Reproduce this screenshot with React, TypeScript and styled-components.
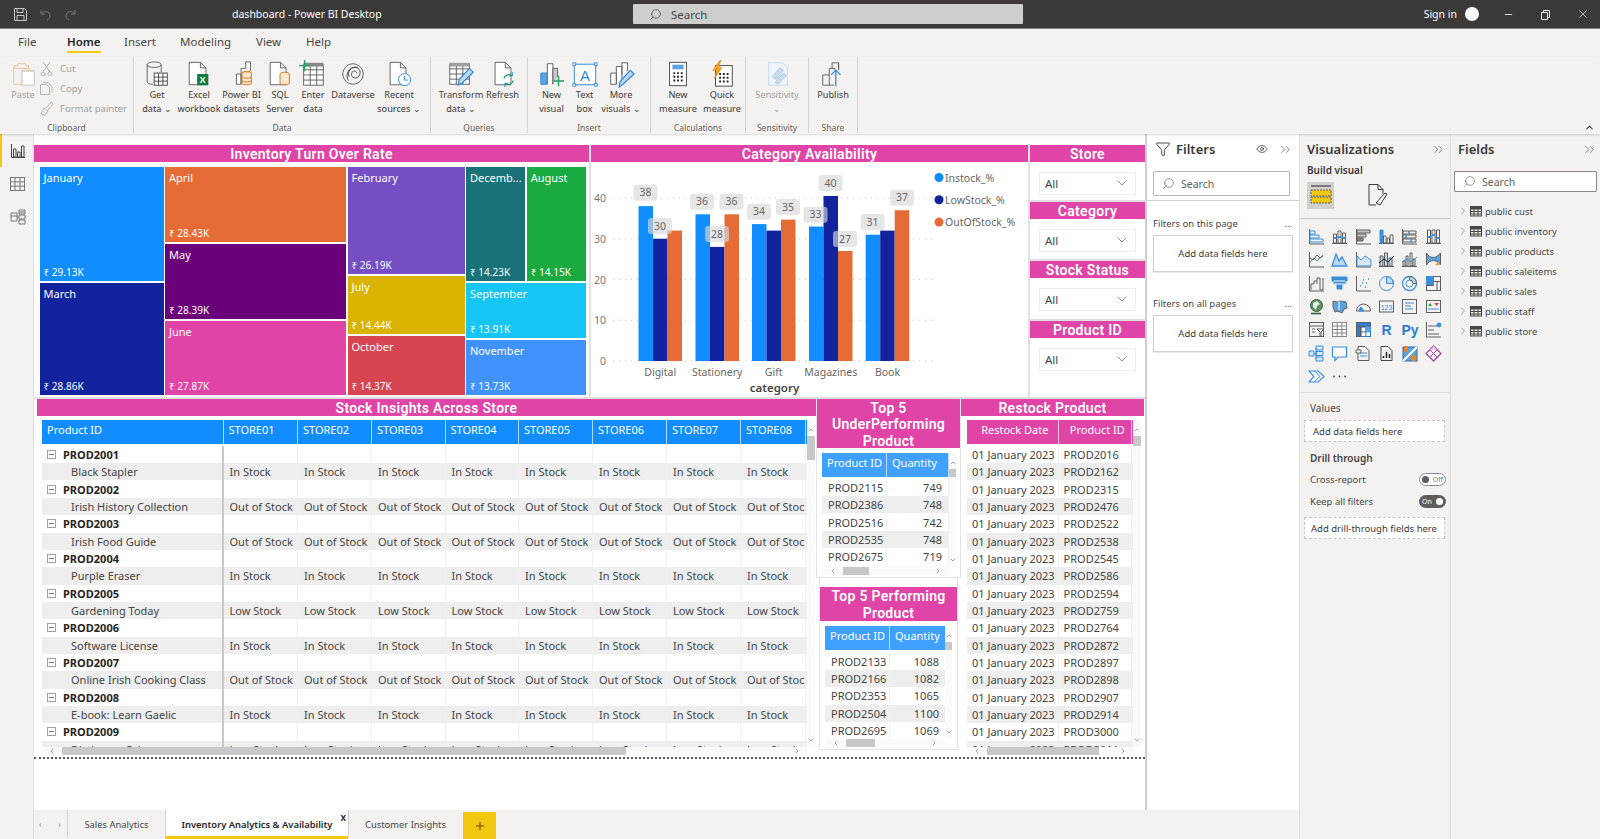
import React from 'react';
import styled, { createGlobalStyle } from 'styled-components';
import { ChevronDown, ChevronRight, ChevronUp, ChevronLeft, ChevronsRight, Search, Filter, Eye, Minus, X, Plus } from 'lucide-react';

const UI = `"Noto Sans", "Open Sans", sans-serif`;
const PINK = '#e044a7';
const D = '#605e5c';
const B = '#3a8fd8';

const GlobalStyle = createGlobalStyle`
  html, body { margin: 0; padding: 0; background: #fff; overflow: hidden; }
  * { box-sizing: border-box; }
  #root { width: 1600px; height: 839px; }
`;

const Window = styled.div`
  width: 1600px;
  height: 839px;
  display: flex;
  flex-direction: column;
  overflow: hidden;
  font-family: ${UI};
  color: #333;
`;

/* title bar */
const TitleBar = styled.div`
  height: 29px;
  flex: none;
  background: #3b3a39;
  border-bottom: 1px solid #8a8886;
  display: flex;
  align-items: center;
  color: #fff;
  font-size: 10.5px;
`;
const QuickIcons = styled.div`
  width: 232px;
  display: flex;
  gap: 10px;
  padding-left: 13px;
  align-items: center;
`;
const AppName = styled.div`
  width: 401px;
`;
const TopSearch = styled.div`
  width: 390px;
  height: 20px;
  background: #cdcdcb;
  border-radius: 1px;
  display: flex;
  align-items: center;
  gap: 9px;
  padding-left: 16px;
  color: #484644;
  font-size: 11.5px;
`;
const TopRight = styled.div`
  margin-left: auto;
  display: flex;
  align-items: center;
  margin-right: -1px;
`;
const SignIn = styled.span`
  margin-right: 8px;
  font-size: 10.5px;
`;
const Avatar = styled.span`
  width: 14px;
  height: 14px;
  border-radius: 50%;
  background: #fff;
  margin-right: 11px;
`;
const WinButton = styled.span`
  width: 37px;
  display: flex;
  justify-content: center;
  color: #e8e8e8;
`;

/* menu + ribbon */
const MenuBar = styled.div`
  height: 28px;
  flex: none;
  background: #f3f2f1;
  display: flex;
  font-size: 11.5px;
  color: #484644;
  padding-left: 18px;
`;
const MenuItem = styled.div<{ $w: number; $active?: boolean }>`
  width: ${p => p.$w}px;
  padding-top: 5px;
  position: relative;
  color: ${p => (p.$active ? '#252423' : '#484644')};
  font-weight: ${p => (p.$active ? 600 : 400)};
  span {
    display: inline-block;
    padding-bottom: 2px;
    border-bottom: ${p => (p.$active ? '2px solid #f2c811' : '2px solid transparent')};
  }
`;
const Ribbon = styled.div`
  height: 77px;
  flex: none;
  background: #f3f2f1;
  display: flex;
  box-shadow: 0 1px 2px rgba(0, 0, 0, 0.16);
  position: relative;
  z-index: 2;
`;
const Group = styled.div<{ $w: number; $pad?: number }>`
  width: ${p => p.$w}px;
  flex: none;
  height: 76px;
  border-right: 1px solid #d6d4d2;
  display: flex;
  flex-direction: column;
  padding-left: ${p => p.$pad ?? 0}px;
`;
const GroupBody = styled.div`
  flex: 1;
  display: flex;
  min-height: 0;
`;
const GroupLabel = styled.div<{ $shift?: number }>`
  height: 13px;
  line-height: 15px;
  text-align: center;
  font-size: 8.5px;
  color: #605e5c;
  margin-left: ${p => -(p.$shift ?? 0)}px;
`;
const RibbonBtn = styled.div<{ $w: number; $muted?: boolean }>`
  width: ${p => p.$w}px;
  flex: none;
  display: flex;
  flex-direction: column;
  align-items: center;
  text-align: center;
  font-size: 9.2px;
  line-height: 14px;
  color: ${p => (p.$muted ? '#a19f9d' : '#3b3a39')};
  padding-top: 3px;
  svg { flex: none; }
  span { white-space: nowrap; }
`;
const SmallStack = styled.div`
  display: flex;
  flex-direction: column;
  gap: 5px;
  padding-top: 4px;
  margin-left: -4px;
`;
const SmallCmd = styled.div`
  display: flex;
  align-items: center;
  gap: 6px;
  height: 15px;
  font-size: 9.5px;
  color: #a19f9d;
  white-space: nowrap;
`;
const Collapse = styled.div`
  margin-left: auto;
  align-self: flex-end;
  padding: 0 5px 1px 0;
  color: #484644;
  display: flex;
`;

/* body */
const Body = styled.div`
  flex: 1;
  display: flex;
  min-height: 0;
`;
const LeftNav = styled.div`
  width: 34px;
  flex: none;
  background: #f3f2f1;
  border-right: 1px solid #e1dfdd;
  display: flex;
  flex-direction: column;
`;
const NavItem = styled.div<{ $active?: boolean }>`
  height: 33.3px;
  display: flex;
  align-items: center;
  justify-content: center;
  border-left: 2px solid ${p => (p.$active ? '#f2c811' : 'transparent')};
`;
const Center = styled.div`
  width: 1265px;
  flex: none;
  display: flex;
  flex-direction: column;
`;
const CenterTop = styled.div`
  flex: 1;
  display: flex;
  min-height: 0;
`;
const Canvas = styled.div`
  width: 1111px;
  flex: none;
  background: #fff;
  padding-top: 11px;
`;
const Page = styled.div`
  height: 614px;
  border-bottom: 2px dotted #555;
  display: flex;
  flex-direction: column;
`;
const TopRow = styled.div`
  height: 254px;
  flex: none;
  display: flex;
  border-bottom: 2px solid #e0e0e0;
`;
const BottomRow = styled.div`
  flex: 1;
  display: flex;
  padding-left: 3px;
  min-height: 0;
`;
const VisualTitle = styled.div<{ $h?: number; $lh?: number; $top?: number }>`
  height: ${p => p.$h ?? 17}px;
  margin-top: ${p => p.$top ?? 0}px;
  padding-top: ${p => (p.$lh ? 1 : 0)}px;
  background: ${PINK};
  color: #fff;
  font-family: Roboto, "Noto Sans", sans-serif;
  font-weight: 600;
  font-size: 14px;
  letter-spacing: 0.3px;
  line-height: ${p => p.$lh ?? 19}px;
  text-align: center;
  flex: none;
`;
const Visual = styled.div<{ $w: number }>`
  width: ${p => p.$w}px;
  flex: none;
  display: flex;
  flex-direction: column;
  min-height: 0;
`;

/* treemap */
const Tree = styled.div`
  display: flex;
  gap: 1.5px;
  padding: 4.5px 0 0 5.5px;
  height: 233px;
`;
const TreeCol = styled.div<{ $w: number }>`
  width: ${p => p.$w}px;
  flex: none;
  display: flex;
  flex-direction: column;
  gap: 2px;
`;
const TreeRow = styled.div<{ $h: number }>`
  height: ${p => p.$h}px;
  flex: none;
  display: flex;
  gap: 1.5px;
`;
const Tile = styled.div<{ $c: string; $h?: number }>`
  background: ${p => p.$c};
  flex: ${p => (p.$h ? `0 0 ${p.$h}px` : '1 1 0')};
  min-width: 0;
  color: #fff;
  display: flex;
  flex-direction: column;
  justify-content: space-between;
  padding: 3px 4px 1px;
  font-size: 11px;
  line-height: 16px;
  overflow: hidden;
  white-space: nowrap;
`;
const TileValue = styled.span`
  font-size: 10px;
`;

/* chart */
const ChartBox = styled.div`
  height: 252px;
  border-left: 2px solid #e0e0e0;
  border-right: 2px solid #e0e0e0;
  svg { display: block; }
`;

/* slicers */
const Slicer = styled.div<{ $h: number }>`
  height: ${p => p.$h}px;
  display: flex;
  flex-direction: column;
  border-bottom: 2px solid #e0e0e0;
  &:last-child { border-bottom: none; }
`;
const Dropdown = styled.div`
  margin: 9.5px 9px 0 9px;
  height: 23px;
  border: 1px solid #eeeeee;
  display: flex;
  align-items: center;
  justify-content: space-between;
  padding: 0 5px;
  font-size: 11.5px;
  color: #444;
`;

/* tables */
const TableFrame = styled.div<{ $m?: string }>`
  display: grid;
  grid-template-columns: 1fr auto;
  grid-template-rows: 1fr auto;
  flex: 1;
  min-height: 0;
  padding: ${p => p.$m ?? '4px 1px 2px 5px'};
`;
const Grid = styled.div`
  overflow: hidden;
  min-height: 0;
`;
const Row = styled.div<{ $cols: string; $alt?: boolean }>`
  display: grid;
  grid-template-columns: ${p => p.$cols};
  height: 17.35px;
  background: ${p => (p.$alt ? '#eeeeee' : '#fff')};
  font-size: 11px;
  line-height: 17px;
  color: #444;
  white-space: nowrap;
`;
const HeadRow = styled.div<{ $cols: string; $c: string; $gap?: number }>`
  display: grid;
  grid-template-columns: ${p => p.$cols};
  height: 24px;
  margin-bottom: ${p => p.$gap ?? 1.8}px;
  background: ${p => p.$c};
  color: #fff;
  font-size: 11px;
  line-height: 19px;
`;
const HeadCell = styled.div<{ $center?: boolean }>`
  padding-left: 5px;
  border-right: 1px solid #ffffffaa;
  text-align: ${p => (p.$center ? 'center' : 'left')};
  white-space: nowrap;
  overflow: hidden;
`;
const Cell = styled.div<{ $pad?: number; $right?: boolean; $bold?: boolean; $sep?: boolean }>`
  padding-left: ${p => p.$pad ?? 6}px;
  padding-right: ${p => (p.$right ? 6 : 0)}px;
  font-weight: ${p => (p.$bold ? 700 : 400)};
  color: ${p => (p.$bold ? '#252423' : '#444')};
  border-right: ${p => (p.$sep ? '2px solid #c8c8c8' : '1px solid #f0f0f0')};
  overflow: hidden;
  display: flex;
  align-items: center;
  justify-content: ${p => (p.$right ? 'flex-end' : 'flex-start')};
`;
const Expander = styled.span`
  width: 9px;
  height: 9px;
  border: 1px solid #a19f9d;
  margin-right: 7px;
  flex: none;
  display: flex;
  align-items: center;
  justify-content: center;
  &::after { content: ''; width: 5px; height: 1px; background: #777; }
`;
const VBar = styled.div<{ $w: number; $top: number; $h: number }>`
  width: ${p => p.$w}px;
  background: #fafafa;
  display: flex;
  flex-direction: column;
  align-items: center;
  color: #777;
  padding-top: ${p => p.$top}px;
  i { width: 100%; height: ${p => p.$h}px; background: #c8c8c8; margin-top: 2px; }
  svg:last-child { margin-top: auto; margin-bottom: 3px; }
`;
const HBar = styled.div<{ $pad: number; $thumb: number }>`
  height: 8px;
  background: #fafafa;
  display: flex;
  align-items: center;
  color: #777;
  padding: 0 ${p => p.$pad}px;
  i { height: 8px; width: ${p => p.$thumb}px; background: #c8c8c8; margin-left: 6px; }
  svg:last-child { margin-left: auto; }
`;
const MidCol = styled.div`
  width: 145px;
  flex: none;
  display: flex;
  flex-direction: column;
`;
const MiniVisual = styled.div<{ $h: number; $inset?: number }>`
  height: ${p => p.$h}px;
  margin: 0 ${p => p.$inset ?? 0}px;
  border: 1px solid #e4e4e4;
  border-top: none;
  display: flex;
  flex-direction: column;
  flex: none;
`;

/* filter pane */
const FilterPane = styled.div`
  width: 154px;
  flex: none;
  background: #fff;
  border-left: 2px solid #d2d0ce;
  display: flex;
  flex-direction: column;
`;
const PaneHead = styled.div<{ $split?: boolean; $pr?: number }>`
  height: 30px;
  flex: none;
  display: flex;
  align-items: center;
  font-size: 13px;
  font-weight: 600;
  color: #3b3a39;
  padding-left: ${p => (p.$split ? 7 : 0)}px;
  padding-right: ${p => p.$pr ?? 0}px;
  justify-content: ${p => (p.$split ? 'space-between' : 'flex-start')};
`;
const FilterIcon = styled(Filter)`
  margin: 0 5px 0 8px;
`;
const EyeIcon = styled(Eye)`
  margin-left: auto;
`;
const CloseChevrons = styled(ChevronsRight)`
  margin: 0 6px 0 10px;
`;
const SearchIcon = styled(Search)`
  transform: scaleX(-1);
`;
const SearchWrap = styled.div<{ $pad: string; $line?: boolean }>`
  padding: ${p => p.$pad};
  border-bottom: ${p => (p.$line ? '1px solid #d2d0ce' : 'none')};
`;
const PaneSearch = styled.div<{ $dark?: boolean; $w: number; $h: number }>`
  width: ${p => p.$w}px;
  height: ${p => p.$h}px;
  background: #fff;
  border: 1px solid ${p => (p.$dark ? '#8a8886' : '#b8b6b4')};
  border-radius: 1px;
  display: flex;
  align-items: center;
  gap: 6px;
  padding-left: 8px;
  font-size: 10.5px;
  color: #605e5c;
`;
const FilterHead = styled.div<{ $top: number }>`
  margin: ${p => p.$top}px 7px 0 6px;
  height: 16px;
  display: flex;
  justify-content: space-between;
  align-items: center;
  font-size: 9.5px;
  color: #484644;
`;
const FilterBox = styled.div`
  margin: 4px 6px 0;
  height: 37px;
  width: 140px;
  border: 1px solid #d2d0ce;
  box-shadow: 0 1px 1px rgba(0, 0, 0, 0.08);
  font-size: 9.5px;
  color: #3b3a39;
  display: flex;
  align-items: center;
  justify-content: center;
`;

/* viz pane */
const VizPane = styled.div`
  width: 151px;
  flex: none;
  background: #f3f2f1;
  border-left: 1px solid #e1dfdd;
  display: flex;
  flex-direction: column;
`;
const BuildLabel = styled.div`
  font-size: 10px;
  font-weight: 600;
  color: #3b3a39;
  padding-left: 7px;
  height: 13px;
  line-height: 13px;
`;
const BuildTabs = styled.div`
  display: flex;
  align-items: center;
  padding: 3px 0 0 7px;
  height: 42px;
  border-bottom: 1px solid #c8c6c4;
`;
const BuildTab = styled.div<{ $on?: boolean }>`
  width: 27px;
  height: 27px;
  margin-bottom: 8px;
  background: ${p => (p.$on ? '#d2d0ce' : 'transparent')};
  display: flex;
  align-items: center;
  justify-content: center;
  margin-right: 30px;
`;
const VizGrid = styled.div`
  display: grid;
  grid-template-columns: repeat(6, 23.33px);
  grid-auto-rows: 23.33px;
  padding: 6px 0 0 5px;
  height: 174px;
  border-bottom: 1px solid #e1dfdd;
  justify-items: center;
  align-items: center;
`;
const VizLetter = styled.span<{ $fs: number }>`
  font-family: "Liberation Sans", sans-serif;
  font-weight: 700;
  font-size: ${p => p.$fs}px;
  color: #2b7cd3;
  line-height: 1;
`;
const WellLabel = styled.div<{ $top: number; $bold?: boolean }>`
  padding-left: 10px;
  margin-top: ${p => p.$top}px;
  font-size: 10px;
  line-height: 14px;
  color: #484644;
  font-weight: ${p => (p.$bold ? 600 : 400)};
`;
const Well = styled.div<{ $pl: number; $top: number }>`
  margin: ${p => p.$top}px 4px 0 4px;
  width: 141px;
  height: 22px;
  background: #fff;
  border: 1px dashed #c8c6c4;
  font-size: 9.5px;
  color: #3b3a39;
  display: flex;
  align-items: center;
  padding-left: ${p => p.$pl}px;
  white-space: nowrap;
`;
const ToggleRow = styled.div<{ $top: number }>`
  margin: ${p => p.$top}px 4px 0 10px;
  height: 14px;
  display: flex;
  justify-content: space-between;
  align-items: center;
  font-size: 9.5px;
  color: #484644;
`;
const Toggle = styled.span<{ $on?: boolean }>`
  width: 27px;
  height: 13px;
  border-radius: 7px;
  border: 1px solid ${p => (p.$on ? '#605e5c' : '#8a8886')};
  background: ${p => (p.$on ? '#605e5c' : '#fff')};
  color: ${p => (p.$on ? '#fff' : '#777')};
  font-size: 7px;
  display: flex;
  flex-direction: ${p => (p.$on ? 'row' : 'row-reverse')};
  align-items: center;
  justify-content: space-between;
  padding: 0 2px;
  &::after {
    content: '';
    width: 7px;
    height: 7px;
    border-radius: 50%;
    background: ${p => (p.$on ? '#fff' : '#605e5c')};
  }
`;

/* fields pane */
const FieldsPane = styled.div`
  flex: 1;
  background: #f3f2f1;
  border-left: 1px solid #e1dfdd;
  display: flex;
  flex-direction: column;
`;
const FieldList = styled.div`
  padding-top: 9px;
`;
const FieldRow = styled.div`
  height: 20px;
  display: flex;
  align-items: center;
  padding-left: 6px;
  font-size: 9.5px;
  color: #484644;
  white-space: nowrap;
`;
const FieldTable = styled.svg`
  margin: 0 3px 0 1px;
`;

/* page tabs */
const TabBar = styled.div`
  height: 29px;
  flex: none;
  background: #f3f2f1;
  display: flex;
  align-items: flex-end;
  font-size: 9.4px;
  color: #3b3a39;
`;
const TabArrows = styled.div`
  width: 33px;
  height: 29px;
  display: flex;
  align-items: center;
  justify-content: space-between;
  padding: 0 3px 0 2px;
  color: #c0bebc;
`;
const PageTab = styled.div<{ $w: number; $active?: boolean }>`
  width: ${p => p.$w}px;
  height: 29px;
  position: relative;
  display: flex;
  align-items: center;
  justify-content: center;
  background: ${p => (p.$active ? '#fff' : 'transparent')};
  border-left: 1px solid #d2d0ce;
  border-bottom: 3px solid ${p => (p.$active ? '#f2c811' : 'transparent')};
  font-weight: ${p => (p.$active ? 600 : 400)};
  color: ${p => (p.$active ? '#252423' : '#484644')};
  white-space: nowrap;
  padding-top: 2px;
`;
const TabClose = styled.span`
  position: absolute;
  top: 1px;
  right: 2px;
  line-height: 12px;
  font-size: 10px;
`;
const AddTab = styled.div`
  width: 33px;
  height: 27px;
  margin-left: 1px;
  background: #f2c811;
  display: flex;
  align-items: center;
  justify-content: center;
  color: #8a6d00;
`;

const Ico = ({ children }: { children: React.ReactNode }) => (
  <svg width="28" height="28" viewBox="0 0 30 30" fill="none" stroke="#605e5c" strokeWidth="1">
    {children}
  </svg>
);
const Gridlines = ({ x, y, w, h, c = 3, r = 3, stroke = '#605e5c' }: any) => (
  <g stroke={stroke}>
    <rect x={x} y={y} width={w} height={h} fill="#fff" />
    {Array.from({ length: c - 1 }, (_, i) => <line key={i} x1={x + (w * (i + 1)) / c} x2={x + (w * (i + 1)) / c} y1={y} y2={y + h} />)}
    {Array.from({ length: r - 1 }, (_, i) => <line key={i} y1={y + (h * (i + 1)) / r} y2={y + (h * (i + 1)) / r} x1={x} x2={x + w} />)}
  </g>
);
const Doc = ({ x = 7, w = 15 }: { x?: number; w?: number }) => (
  <path d={`M${x + 0.5} 2.5h${w - 6}l6 6v18h-${w}z M${x + w - 6 + 0.5} 2.5v6h6`} fill="#fff" />
);

const icons: Record<string, React.ReactNode> = {
  getData: <Ico><ellipse cx="12" cy="5" rx="7.5" ry="3" /><path d="M4.5 5v18c0 2 3 3 6 3M19.5 5v8" /><Gridlines x={12} y={14} w={14} h={13} c={3} r={3} stroke="#484644" /></Ico>,
  excel: <Ico><Doc x={4} w={18} /><rect x="13" y="15" width="12" height="12" fill="#107c41" stroke="none" /><text x="19" y="25" fontSize="10" fontWeight="700" fill="#fff" stroke="none" textAnchor="middle" fontFamily="Liberation Sans">X</text></Ico>,
  pbi: <Ico><path d="M9 26V15h5v11zM14 26V9h5V2h5v10" fill="#fff" /><ellipse cx="20" cy="14" rx="5" ry="2" fill="#f6c28b" stroke="#c9741f" /><path d="M15 14v11c0 2 10 2 10 0V14M15 18c0 2 10 2 10 0M15 22c0 2 10 2 10 0" stroke="#c9741f" fill="#fde6cf" /></Ico>,
  sql: <Ico><Doc x={4} w={17} /><ellipse cx="20" cy="15" rx="5" ry="2" fill="#fde6cf" stroke="#c9741f" /><path d="M15 15v10c0 2 10 2 10 0V15" stroke="#c9741f" fill="#fde6cf" /></Ico>,
  enter: <Ico><Gridlines x={5} y={5} w={21} h={22} c={3} r={4} /><rect x="5" y="3" width="21" height="4" fill="#8a8886" stroke="none" /><path d="M6 0v12M0 6h12" stroke="#21a366" strokeWidth="1.5" /></Ico>,
  dataverse: <Ico><circle cx="15" cy="15" r="11" /><path d="M10 22C6 15 11 7 18 8c6 1 6 9 1 11-4 1-7-2-5-6 2-2 5-1 5 1M20 8c-7-2-12 5-9 10" stroke="#484644" /></Ico>,
  recent: <Ico><Doc x={5} w={17} /><circle cx="21" cy="21" r="6.5" fill="#fff" stroke="#2b88d8" /><path d="M21 17v4.5h3.5" stroke="#2b88d8" /></Ico>,
  transform: <Ico><Gridlines x={3} y={4} w={21} h={22} c={3} r={4} /><rect x="3" y="3" width="21" height="4" fill="#a19f9d" stroke="none" /><path d="M12 27l1-6L24 9l4 4-12 12z" fill="#bcd9f2" stroke="#2b88d8" strokeWidth="1.3" /></Ico>,
  refresh: <Ico><Doc x={6} w={17} /><path d="M16 20a5.5 5.5 0 0 1 9-3M26 22a5.5 5.5 0 0 1-9 3" stroke="#21a366" strokeWidth="1.4" /><path d="M25 13v4h-4M17 29v-4h4" stroke="#2b88d8" /></Ico>,
  newVisual: <Ico><path d="M3 26V14h7v12z" fill="#5ba3e0" stroke="#2b88d8" /><path d="M10 26V4h6v22" fill="#fff" /><path d="M16 26V9h5v9" fill="#c8c6c4" /><path d="M22 17v11M16.5 22.5H28" stroke="#21a366" strokeWidth="1.6" /></Ico>,
  textBox: <Ico><rect x="3.5" y="4.5" width="23" height="22" fill="#fff" stroke="#2b88d8" /><path d="M2 3h3v3H2zM25 3h3v3h-3zM2 25h3v3H2zM25 25h3v3h-3z" fill="#fff" stroke="#2b88d8" /><text x="15" y="22" fontSize="16" fill="#2b88d8" stroke="none" textAnchor="middle" fontFamily="Liberation Sans">A</text></Ico>,
  more: <Ico><path d="M4 26V14h6v12zM10 26V7h6v19M16 16V3h6v9" fill="#fff" /><path d="M13 29l1-6 11-12 4 4-12 11z" fill="#bcd9f2" stroke="#2b88d8" strokeWidth="1.3" /></Ico>,
  measure: <Ico><rect x="6" y="2.5" width="18" height="25" fill="#fff" stroke="#484644" /><rect x="9" y="5" width="12" height="5" fill="#5ba3e0" stroke="none" /><path d="M10 14h2M14 14h2M18 14h2M10 18h2M14 18h2M18 18h2M10 22h2M14 22h2M18 22h2" stroke="#252423" strokeWidth="2" /></Ico>,
  quick: <Ico><rect x="8" y="6" width="18" height="22" fill="#fff" stroke="#484644" /><path d="M12 15h2M16 15h2M20 15h2M12 19h2M16 19h2M20 19h2M12 23h2M16 23h2M20 23h2" stroke="#252423" strokeWidth="2" /><path d="M13 0L5 11h4l-2 9 8-12h-4l3-8z" fill="#f7a11a" stroke="#c9741f" strokeWidth=".5" /></Ico>,
  sensitivity: <Ico><path d="M6 3h15l5 5v19H6z" fill="#eef5fb" stroke="#c8dced" /><path d="M10 18l8-10 4 3-8 10zM13 24l9-10 3 3-9 9z" fill="#c8dced" stroke="#a9c8e0" /></Ico>,
  publish: <Ico><path d="M4 27V16h7v11zM11 16V9h6v2M14 9V3h7v6" fill="none" /><path d="M21 3v8" /><path d="M18 28V12M13 16l5-5 5 5" stroke="#2b88d8" strokeWidth="1.3" /><path d="M11 27h5" /></Ico>,
  paste: <Ico><path d="M6 6h3V4h9v2h3v3H6z" fill="#f3f2f1" stroke="#e8c496" /><path d="M5 7v19h9V11h13" stroke="#e8c496" /><rect x="14" y="12" width="13" height="15" fill="#fff" stroke="#c8c6c4" /></Ico>,
};

const Small = ({ d }: { d: React.ReactNode }) => (
  <svg width="15" height="15" viewBox="0 0 15 15" fill="none" stroke="#b5b3b1" strokeWidth="1">{d}</svg>
);

const V = ({ children }: { children: React.ReactNode }) => (
  <svg width="17" height="17" viewBox="0 0 17 17" fill="none" stroke={D} strokeWidth="1">{children}</svg>
);
const vizIcons: React.ReactNode[] = [
  <V><path d="M1.5 1v15H16" /><path d="M2 3h5v3H2zM2 7h9v3H2zM2 11h13v3H2z" stroke={B} /></V>,
  <V><path d="M1 15.5h15" /><path d="M2.5 15V6h3v9zM7 15V3h3v12zM11.5 15V5h3v10z" stroke={D} /><path d="M7 9h3M2.5 10h3M11.5 10h3" stroke={B} strokeWidth="2" /></V>,
  <V><path d="M1.5 1v15H16" stroke={D} /><path d="M2 2h13v3H2zM2 6h9v3H2z" fill="#c8c6c4" /><path d="M2 10h6v3H2z" stroke={D} fill="#8a8886" /></V>,
  <V><path d="M1 15.5h15" /><path d="M2 15V2h3v13z" fill={B} stroke={B} /><path d="M5.5 15V8h2.5v7zM9 15V10h2.5v5zM12 15V7h3v8z" stroke={D} /></V>,
  <V><path d="M1.5 1v15H16" /><path d="M2 3h13v3H2zM2 7h13v3H2zM2 11h13v3H2z" /><path d="M8 3v3M5 7v3M10 11v3" stroke={B} strokeWidth="1.5" /></V>,
  <V><path d="M1 15.5h15" /><path d="M2.5 15V2h3v13zM7 15V2h3v13zM11.5 15V2h3v13z" /><path d="M2.5 9h3M7 7h3M11.5 10h3" stroke={B} strokeWidth="2" /></V>,
  <V><path d="M1.5 1v15H16" /><path d="M2 11l4-4 3 3 6-6" stroke={B} /><path d="M2 7l3 2 4-5 3 3 3-2" stroke={D} /></V>,
  <V><path d="M1 15h15l-5-9-3 4-3-7z" fill="#bcd9f2" stroke={B} strokeWidth="1.3" /></V>,
  <V><path d="M1.5 1v15H16" /><path d="M2 5l4 4 4-4 6 4v6H2z" fill="#d9e8f5" stroke={B} /></V>,
  <V><path d="M1 15.5h15" /><path d="M2 15V5h3v10zM6.5 15V2h3v13zM11 15V7h3v8z" fill="#bcd9f2" stroke={D} /><path d="M1 12l5-4 4 3 6-6" stroke="#252423" /></V>,
  <V><path d="M1 15.5h15" /><path d="M2 15v-5h2v5zM5 15V5h2v10zM9 15V2h2v13zM12 15V8h2v7z" stroke={D} /><path d="M1 11l5-3 4 3 6-5" stroke={B} /></V>,
  <V><path d="M1.5 2C5 8 11 8 15.5 2v12C11 8 5 8 1.5 14z" fill="#5ba3e0" stroke={D} /><path d="M10 14l3-3 3 3z" fill="#e8a33d" stroke="none" /></V>,
  <V><path d="M1.5 1v15H16" /><path d="M3 15V9h3V6h3v3M9 6V3h3v12h3V3" /></V>,
  <V><path d="M1 2h15v4h-2v3h-3v5H6V9H3V6H1z" fill={B} stroke={B} /><path d="M3 6h11M3 9h11" stroke="#fff" /></V>,
  <V><path d="M1.5 1v15H16" /><path d="M5 11h1M8 5h1M7 8h1M11 8h1M13 4h1M10 12h1" stroke={B} strokeWidth="1.5" /></V>,
  <V><path d="M8.5 8.5V1.5a7 7 0 0 1 7 7z" fill="#bcd9f2" stroke={B} /><circle cx="8.5" cy="8.5" r="7" stroke={B} /></V>,
  <V><circle cx="8.5" cy="8.5" r="7" stroke={B} strokeWidth="1.3" /><circle cx="8.5" cy="8.5" r="3.5" stroke={B} fill="#fff" /><path d="M8.5 1.5a7 7 0 0 1 7 7H12a3.5 3.5 0 0 0-3.5-3.5z" fill="#bcd9f2" /></V>,
  <V><rect x="1.5" y="1.5" width="14" height="14" /><path d="M1.5 1.5h7v9h-7z" fill={B} stroke={B} /><path d="M8.5 6.5h7M12 6.5v9M1.5 10.5h7" /></V>,
  <V><circle cx="8.5" cy="7.5" r="6" fill="#5f8f63" stroke="#2f5d37" /><path d="M5 5l4-2 3 3-3 2-1 4-3-3z" fill="#e8f0e6" stroke="none" /><path d="M3 15.5h10" stroke="#2f5d37" strokeWidth="1.6" /></V>,
  <V><path d="M2 3l4 1 3-1 6 1 1 6-3 1-2 4-4-2-3 1-2-5z" fill="#5ba3e0" stroke={D} /><path d="M8 3v9" stroke="#fff" /></V>,
  <V><path d="M1.5 13a7 7 0 0 1 14 0z" stroke={D} /><path d="M4 13a4.5 4.5 0 0 1 2-4l3 4z" fill={B} stroke={B} /></V>,
  <V><rect x="1.5" y="3" width="14" height="11" stroke={D} /><text x="8.5" y="11.5" fontSize="7" fill={B} stroke="none" textAnchor="middle" fontFamily="Liberation Sans">123</text></V>,
  <V><rect x="1.5" y="1.5" width="14" height="14" /><path d="M4 5h9M4 8h6M4 11h8" stroke={B} strokeWidth="1.2" /></V>,
  <V><rect x="1.5" y="2.5" width="14" height="12" /><path d="M3 8l2-3 2 3z" fill="#1aab40" stroke="none" /><path d="M9 5h5l-2.5 3z" fill="#d64550" stroke="none" /><path d="M3 11h11" stroke={B} /></V>,
  <V><rect x="1.5" y="1.5" width="14" height="14" /><path d="M1.5 5h14M4 8h3M4 11h3" /><path d="M9 8h7l-3 3v4l-1 1v-5z" fill="#fff" stroke={D} /></V>,
  <V><Gridlines x={1.5} y={1.5} w={14} h={14} c={3} r={4} stroke="#8a8886" /></V>,
  <V><Gridlines x={1.5} y={1.5} w={14} h={14} c={3} r={3} stroke="#2b7cd3" /><path d="M1.5 1.5h14v4h-14zM1.5 5.5h4v10h-4z" fill="#2b7cd3" /><path d="M10 5.5h5.5v5H10z" fill="#5ba3e0" stroke="none" /></V>,
  <VizLetter $fs={14}>R</VizLetter>,
  <VizLetter $fs={14}>Py</VizLetter>,
  <V><path d="M1.5 1v15H16" /><path d="M3 5h9M3 9h6M3 13h11" stroke={D} /><circle cx="14" cy="4" r="2" fill={B} stroke={B} /></V>,
  <V><path d="M1 6h5v5H1zM8 1h7v4H8zM8 6.5h7v4H8zM8 12h7v4H8z" stroke={B} fill="#d9e8f5" /><path d="M6 8.5h2M8 3v11" stroke={B} /></V>,
  <V><path d="M1.5 2h14v10H7l-3 3.5V12H1.5z" stroke={B} fill="#fff" strokeWidth="1.2" /></V>,
  <V><path d="M3 1.5h7l4 4v10H3z" /><path d="M5 8h7M5 11h7" stroke={B} /><path d="M1 5h5v3H1z" fill="#fff" stroke={D} /></V>,
  <V><path d="M3 1.5h7l4 4v10H3z" stroke="#484644" /><path d="M5.5 13v-2M8.5 13V7M11.5 13V9" stroke="#252423" strokeWidth="1.5" /></V>,
  <V><rect x="2" y="2" width="14" height="14" fill="#5ba3e0" stroke="#2b6cb0" /><path d="M2 16L16 2" stroke="#fff" strokeWidth="2" /><path d="M3 1h4v5L5 8 3 6z" fill="#e8832a" stroke="none" /><circle cx="12.5" cy="13" r="3" fill="#e8832a" stroke="none" /></V>,
  <V><path d="M8.5 1L16 8.5 8.5 16 1 8.5z" stroke="#a64ca6" strokeWidth="1.3" /><path d="M5 5l7 7M12 5l-7 7" stroke="#a64ca6" /><path d="M8.5 1L5 5h7z" fill="#e8c8e8" stroke="none" /></V>,
  <V><path d="M1 3h9l6 5.5-6 5.5H1l5-5.5z" stroke={B} fill="#fff" strokeWidth="1.2" /><path d="M6 14l6-5.5L7 3" stroke={B} /></V>,
  <svg width="17" height="17" viewBox="0 0 17 17" fill="#605e5c"><circle cx="3" cy="8.5" r="1" /><circle cx="8.5" cy="8.5" r="1" /><circle cx="14" cy="8.5" r="1" /></svg>,
];

const chartData = [
  { name: 'Digital', x: 47.5, v: [38, 30, 32], labels: [[54.4, 30.7, 38], [69, 64, 30]] },
  { name: 'Stationery', x: 104.5, v: [36, 28, 36], labels: [[111, 39.7, 36], [126, 72, 28], [140.5, 39.7, 36]] },
  { name: 'Gift', x: 161, v: [33.6, 32, 34.7], labels: [[168, 49.7, 34], [197, 45, 35]] },
  { name: 'Magazines', x: 218, v: [33, 40.5, 27], labels: [[224.5, 52.7, 33], [239.5, 21, 40], [254, 77, 27]] },
  { name: 'Book', x: 274.7, v: [31, 32, 37], labels: [[281.6, 60, 31], [311, 35.7, 37]] },
];
const seriesColors = ['#118dff', '#12239e', '#e66c37'];
const AXIS_Y = 199;
const UNIT = 4.075;

const Chart = () => (
  <svg width="435" height="235" viewBox="0 0 435 235" fontFamily={UI}>
    {[0, 10, 20, 30, 40].map(t => (
      <g key={t}>
        <line x1="22" x2="343" y1={AXIS_Y - t * UNIT} y2={AXIS_Y - t * UNIT} stroke="#c8c6c4" strokeDasharray="1 5" />
        <text x="15" y={AXIS_Y - t * UNIT + 4} fontSize="10.5" fill="#777" textAnchor="end">{t}</text>
      </g>
    ))}
    {chartData.map(g => (
      <g key={g.name}>
        {g.v.map((val, i) => (
          <rect key={i} x={g.x + i * 14.5} y={AXIS_Y - val * UNIT} width="14.5" height={val * UNIT} fill={seriesColors[i]} />
        ))}
        <text x={g.x + 21.75} y="214" fontSize="10.5" fill="#666" textAnchor="middle">{g.name}</text>
      </g>
    ))}
    {chartData.flatMap(g => g.labels.map(([x, y, t], i) => (
      <g key={g.name + i}>
        <rect x={x - 12} y={y - 8} width="24" height="16" rx="3" fill="#d9d9d9" fillOpacity="0.65" />
        <text x={x} y={y + 3.5} fontSize="10.5" fill="#666" textAnchor="middle">{t}</text>
      </g>
    )))}
    <text x="183.5" y="230" fontSize="11.5" fontWeight="600" fill="#444" textAnchor="middle">category</text>
    {['Instock_%', 'LowStock_%', 'OutOfStock_%'].map((s, i) => (
      <g key={s}>
        <circle cx="348" cy={15.5 + i * 22.3} r="4.5" fill={seriesColors[i]} />
        <text x="354" y={19.5 + i * 22.3} fontSize="10.5" fill="#666">{s}</text>
      </g>
    ))}
  </svg>
);

const products: [string, string, string][] = [
  ['PROD2001', 'Black Stapler', 'In Stock'],
  ['PROD2002', 'Irish History Collection', 'Out of Stock'],
  ['PROD2003', 'Irish Food Guide', 'Out of Stock'],
  ['PROD2004', 'Purple Eraser', 'In Stock'],
  ['PROD2005', 'Gardening Today', 'Low Stock'],
  ['PROD2006', 'Software License', 'In Stock'],
  ['PROD2007', 'Online Irish Cooking Class', 'Out of Stock'],
  ['PROD2008', 'E-book: Learn Gaelic', 'In Stock'],
  ['PROD2009', 'Dictionary Primer', 'Low Stock'],
];
const stores = ['STORE01', 'STORE02', 'STORE03', 'STORE04', 'STORE05', 'STORE06', 'STORE07', 'STORE08'];
const stockCols = '181.5px 74.5px 74px 73.5px 73.5px 74px 74px 74px 65px';
const restockCols = '91.6px 73.4px';
const restock = ['2016', '2162', '2315', '2476', '2522', '2538', '2545', '2586', '2594', '2759', '2764', '2872', '2897', '2898', '2907', '2914', '3000', '3011'];
const under: [string, number][] = [['PROD2115', 749], ['PROD2386', 748], ['PROD2516', 742], ['PROD2535', 748], ['PROD2675', 719]];
const top5: [string, number][] = [['PROD2133', 1088], ['PROD2166', 1082], ['PROD2353', 1065], ['PROD2504', 1100], ['PROD2695', 1069]];

const Scroll = { Up: <ChevronUp size={8} strokeWidth={2} />, Down: <ChevronDown size={8} strokeWidth={2} />, Left: <ChevronLeft size={8} strokeWidth={2} />, Right: <ChevronRight size={8} strokeWidth={2} /> };

const TopTable = ({ rows, cols, frame, hp, thumb, gap }: { rows: [string, number][]; cols: string; frame: string; hp: number; thumb: number; gap: number }) => (
  <TableFrame $m={frame}>
    <Grid>
      <HeadRow $cols={cols} $c="#3fa0ff" $gap={gap}>
        <HeadCell>Product ID</HeadCell>
        <HeadCell>Quantity</HeadCell>
      </HeadRow>
      {rows.map(([id, q], i) => (
        <Row key={id} $cols={cols} $alt={i % 2 === 1}>
          <Cell>{id}</Cell>
          <Cell $right>{q}</Cell>
        </Row>
      ))}
    </Grid>
    <VBar $w={7} $top={6} $h={8}>{Scroll.Up}<i />{Scroll.Down}</VBar>
    <HBar $pad={hp} $thumb={thumb}>{Scroll.Left}<i />{Scroll.Right}</HBar>
    <div />
  </TableFrame>
);

const TableIcon = () => (
  <FieldTable width="12" height="12" viewBox="0 0 12 12" fill="none" stroke="#484644">
    <rect x=".5" y="1.5" width="11" height="9.5" />
    <path d="M.5 1.5h11V4H.5z" fill="#484644" />
    <path d="M4 4v7M8 4v7M.5 6.5h11M.5 9h11" />
  </FieldTable>
);

const ribbon = [
  { w: 297, pad: 2, label: 'Data', items: [
    ['getData', 42, 'Get', 'data ⌄'], ['excel', 42, 'Excel', 'workbook'], ['pbi', 43, 'Power BI', 'datasets'], ['sql', 34, 'SQL', 'Server'], ['enter', 32, 'Enter', 'data'], ['dataverse', 48, 'Dataverse', ''], ['recent', 44, 'Recent', 'sources ⌄'],
  ] },
  { w: 97, pad: 7, label: 'Queries', items: [['transform', 46, 'Transform', 'data ⌄'], ['refresh', 37, 'Refresh', '']] },
  { w: 123, pad: 7, label: 'Insert', items: [['newVisual', 33, 'New', 'visual'], ['textBox', 33, 'Text', 'box'], ['more', 40, 'More', 'visuals ⌄']] },
  { w: 95, pad: 5, label: 'Calculations', items: [['measure', 44, 'New', 'measure'], ['quick', 44, 'Quick', 'measure']] },
  { w: 63, pad: 0, label: 'Sensitivity', muted: true, items: [['sensitivity', 62, 'Sensitivity', '⌄']] },
  { w: 49, pad: 0, label: 'Share', items: [['publish', 48, 'Publish', '']] },
] as const;

const App: React.FC = () => (
  <Window>
    <GlobalStyle />
    <TitleBar>
      <QuickIcons>
        <svg width="15" height="15" viewBox="0 0 15 15" fill="none" stroke="#c8c6c4"><path d="M1.5 1.5h10l2 2v10h-12z" /><path d="M4 1.5v4h6v-4M4 13.5v-5h7v5" /></svg>
        <svg width="15" height="15" viewBox="0 0 15 15" fill="none" stroke="#797775"><path d="M3 3v4h4M3 7c3-4 9-3 9 2 0 2-1 3-3 4" /></svg>
        <svg width="15" height="15" viewBox="0 0 15 15" fill="none" stroke="#797775"><path d="M12 3v4H8M12 7c-3-4-9-3-9 2 0 2 1 3 3 4" /></svg>
      </QuickIcons>
      <AppName>dashboard - Power BI Desktop</AppName>
      <TopSearch><SearchIcon size={13} strokeWidth={1.3} />Search</TopSearch>
      <TopRight>
        <SignIn>Sign in</SignIn>
        <Avatar />
        <WinButton><Minus size={11} /></WinButton>
        <WinButton>
          <svg width="11" height="11" viewBox="0 0 11 11" fill="none" stroke="#e8e8e8"><path d="M1.5 3.5h6v7h-6zM3.5 3.5v-2h6v7h-2" /></svg>
        </WinButton>
        <WinButton><X size={14} strokeWidth={1.2} /></WinButton>
      </TopRight>
    </TitleBar>

    <MenuBar>
      <MenuItem $w={49}><span>File</span></MenuItem>
      <MenuItem $w={57} $active><span>Home</span></MenuItem>
      <MenuItem $w={56}><span>Insert</span></MenuItem>
      <MenuItem $w={76}><span>Modeling</span></MenuItem>
      <MenuItem $w={50}><span>View</span></MenuItem>
      <MenuItem $w={40}><span>Help</span></MenuItem>
    </MenuBar>

    <Ribbon>
      <Group $w={134} $pad={3}>
        <GroupBody>
          <RibbonBtn $w={40} $muted>{icons.paste}<span>Paste</span></RibbonBtn>
          <SmallStack>
            <SmallCmd><Small d={<path d="M4 1l7 10M11 1L4 11M4 11a2 2 0 1 0 .1 0M11 11a2 2 0 1 0 .1 0" />} />Cut</SmallCmd>
            <SmallCmd><Small d={<path d="M1.5 3.5h6l3 3v7h-9zM4 1.5h5l4 4v6" />} />Copy</SmallCmd>
            <SmallCmd><Small d={<path d="M2 13l3-6 4 3-3 4zM7 7l5-6 2 2-5 6" />} />Format painter</SmallCmd>
          </SmallStack>
        </GroupBody>
        <GroupLabel $shift={3}>Clipboard</GroupLabel>
      </Group>
      {ribbon.map(g => (
        <Group key={g.label} $w={g.w} $pad={g.pad}>
          <GroupBody>
            {g.items.map(([ic, w, a, b]) => (
              <RibbonBtn key={a + b} $w={w} $muted={'muted' in g}>
                {icons[ic]}
                <span>{a}</span>
                <span>{b}</span>
              </RibbonBtn>
            ))}
          </GroupBody>
          <GroupLabel $shift={g.pad}>{g.label}</GroupLabel>
        </Group>
      ))}
      <Collapse><ChevronUp size={11} strokeWidth={2.5} /></Collapse>
    </Ribbon>

    <Body>
      <LeftNav>
        <NavItem $active>
          <svg width="14" height="14" viewBox="0 0 14 14" fill="none" stroke="#484644"><path d="M.5 0v13.5H14" /><path d="M2.5 13V5H5v8zM6.5 13V8H9v5zM10.5 13V2H13v11z" /></svg>
        </NavItem>
        <NavItem>
          <svg width="15" height="14" viewBox="0 0 15 14" fill="none" stroke="#797775"><rect x=".5" y=".5" width="14" height="13" /><path d="M5 .5v13M10 .5v13M.5 4.8h14M.5 9.2h14" /></svg>
        </NavItem>
        <NavItem>
          <svg width="16" height="16" viewBox="0 0 16 16" fill="none" stroke="#797775"><path d="M1 4h6v8H1zM9 1h6v4H9zM9 6h6v4H9zM9 11h6v4H9zM1 7h6M9 3h6M7 8h2" /></svg>
        </NavItem>
      </LeftNav>

      <Center>
        <CenterTop>
          <Canvas>
            <Page>
              <TopRow>
                <Visual $w={555}>
                  <VisualTitle>Inventory Turn Over Rate</VisualTitle>
                  <Tree>
                    <TreeCol $w={124}>
                      <Tile $c="#118dff" $h={114}>January<TileValue>₹ 29.13K</TileValue></Tile>
                      <Tile $c="#12239e">March<TileValue>₹ 28.86K</TileValue></Tile>
                    </TreeCol>
                    <TreeCol $w={181}>
                      <Tile $c="#e66c37" $h={75}>April<TileValue>₹ 28.43K</TileValue></Tile>
                      <Tile $c="#6b007b" $h={75}>May<TileValue>₹ 28.39K</TileValue></Tile>
                      <Tile $c="#e044a7">June<TileValue>₹ 27.87K</TileValue></Tile>
                    </TreeCol>
                    <TreeCol $w={117}>
                      <Tile $c="#744ec2" $h={107.5}>February<TileValue>₹ 26.19K</TileValue></Tile>
                      <Tile $c="#d9b300" $h={58}>July<TileValue>₹ 14.44K</TileValue></Tile>
                      <Tile $c="#d64550">October<TileValue>₹ 14.37K</TileValue></Tile>
                    </TreeCol>
                    <TreeCol $w={120}>
                      <TreeRow $h={114}>
                        <Tile $c="#197278">Decemb...<TileValue>₹ 14.23K</TileValue></Tile>
                        <Tile $c="#1aab40">August<TileValue>₹ 14.15K</TileValue></Tile>
                      </TreeRow>
                      <Tile $c="#15c6f4" $h={55}>September<TileValue>₹ 13.91K</TileValue></Tile>
                      <Tile $c="#4092ff">November<TileValue>₹ 13.73K</TileValue></Tile>
                    </TreeCol>
                  </Tree>
                </Visual>
                <Visual $w={441}>
                  <ChartBox>
                    <VisualTitle>Category Availability</VisualTitle>
                    <Chart />
                  </ChartBox>
                </Visual>
                <Visual $w={115}>
                  {([['Store', 57], ['Category', 59], ['Stock Status', 60], ['Product ID', 76]] as [string, number][]).map(([t, h]) => (
                    <Slicer key={t} $h={h}>
                      <VisualTitle>{t}</VisualTitle>
                      <Dropdown>All<ChevronDown size={16} strokeWidth={1} color="#555" /></Dropdown>
                    </Slicer>
                  ))}
                </Visual>
              </TopRow>
              <BottomRow>
                <Visual $w={779}>
                  <VisualTitle>Stock Insights Across Store</VisualTitle>
                  <TableFrame>
                    <Grid>
                      <HeadRow $cols={stockCols} $c="#118dff">
                        <HeadCell>Product ID</HeadCell>
                        {stores.map(s => <HeadCell key={s}>{s}</HeadCell>)}
                      </HeadRow>
                      {products.map(([id, name, st]) => (
                        <React.Fragment key={id}>
                          <Row $cols={stockCols}>
                            <Cell $bold $pad={5} $sep><Expander />{id}</Cell>
                            {stores.map(s => <Cell key={s} />)}
                          </Row>
                          <Row $cols={stockCols} $alt>
                            <Cell $pad={29} $sep>{name}</Cell>
                            {stores.map(s => <Cell key={s}>{st}</Cell>)}
                          </Row>
                        </React.Fragment>
                      ))}
                    </Grid>
                    <VBar $w={8} $top={6} $h={24}>{Scroll.Up}<i />{Scroll.Down}</VBar>
                    <HBar $pad={6} $thumb={564}>{Scroll.Left}<i />{Scroll.Right}</HBar>
                    <div />
                  </TableFrame>
                </Visual>
                <MidCol>
                  <MiniVisual $h={179}>
                    <VisualTitle $h={49} $lh={16.3}>Top 5<br />UnderPerforming<br />Product</VisualTitle>
                    <TopTable rows={under} cols="65px 62px" frame="5px 4px 2px 5px" hp={7} thumb={26} gap={1.8} />
                  </MiniVisual>
                  <MiniVisual $h={172} $inset={3}>
                    <VisualTitle $h={34} $lh={16.5} $top={9}>Top 5 Performing<br />Product</VisualTitle>
                    <TopTable rows={top5} cols="65px 56px" frame="5px 5px 2px 5px" hp={7} thumb={29} gap={2.5} />
                  </MiniVisual>
                </MidCol>
                <Visual $w={183}>
                  <VisualTitle>Restock Product</VisualTitle>
                  <TableFrame $m="4px 3px 2px 6px">
                    <Grid>
                      <HeadRow $cols={restockCols} $c={PINK}>
                        <HeadCell $center>Restock Date</HeadCell>
                        <HeadCell $center>Product ID</HeadCell>
                      </HeadRow>
                      {restock.map((id, i) => (
                        <Row key={id} $cols={restockCols} $alt={i % 2 === 1}>
                          <Cell $pad={5}>01 January 2023</Cell>
                          <Cell $pad={5}>PROD{id}</Cell>
                        </Row>
                      ))}
                    </Grid>
                    <VBar $w={8} $top={6} $h={10}>{Scroll.Up}<i />{Scroll.Down}</VBar>
                    <HBar $pad={6} $thumb={112}>{Scroll.Left}<i />{Scroll.Right}</HBar>
                    <div />
                  </TableFrame>
                </Visual>
              </BottomRow>
            </Page>
          </Canvas>
          <FilterPane>
            <PaneHead>
              <FilterIcon size={16} strokeWidth={1.4} />
              Filters
              <EyeIcon size={12} strokeWidth={1.5} />
              <CloseChevrons size={15} strokeWidth={1} />
            </PaneHead>
            <SearchWrap $pad="7px 0 4px 6px" $line>
              <PaneSearch $w={137} $h={25}><SearchIcon size={13} strokeWidth={1.2} />Search</PaneSearch>
            </SearchWrap>
            <FilterHead $top={14}>Filters on this page<span>...</span></FilterHead>
            <FilterBox>Add data fields here</FilterBox>
            <FilterHead $top={23}>Filters on all pages<span>...</span></FilterHead>
            <FilterBox>Add data fields here</FilterBox>
          </FilterPane>
        </CenterTop>
        <TabBar>
          <TabArrows><ChevronLeft size={8} fill="#c0bebc" /><ChevronRight size={8} fill="#c0bebc" /></TabArrows>
          <PageTab $w={98}>Sales Analytics</PageTab>
          <PageTab $w={183} $active>Inventory Analytics &amp; Availability<TabClose>x</TabClose></PageTab>
          <PageTab $w={114}>Customer Insights</PageTab>
          <AddTab><Plus size={12} strokeWidth={3} /></AddTab>
        </TabBar>
      </Center>

      <VizPane>
        <PaneHead $split $pr={4}>
          Visualizations
          <ChevronsRight size={15} strokeWidth={1} />
        </PaneHead>
        <BuildLabel>Build visual</BuildLabel>
        <BuildTabs>
          <BuildTab $on>
            <svg width="22" height="22" viewBox="0 0 22 22" fill="none"><path d="M1 2h20" stroke="#252423" /><rect x="1" y="6" width="20" height="6" fill="#f2c811" stroke="#605e5c" strokeDasharray="2 1" /><rect x="1" y="13" width="20" height="6" fill="#f2c811" stroke="#605e5c" strokeDasharray="2 1" /></svg>
          </BuildTab>
          <BuildTab>
            <svg width="22" height="24" viewBox="0 0 22 24" fill="none" stroke="#3b3a39"><path d="M2 1.5h9l5 5v4M2 1.5V22h7" /><path d="M11 1.5v5h5" /><path d="M9 20l9-10 2 1-7 11z" fill="#fff" /></svg>
          </BuildTab>
        </BuildTabs>
        <VizGrid>{vizIcons.map((v, i) => <React.Fragment key={i}>{v}</React.Fragment>)}</VizGrid>
        <WellLabel $top={8}>Values</WellLabel>
        <Well $pl={8} $top={5}>Add data fields here</Well>
        <WellLabel $top={9} $bold>Drill through</WellLabel>
        <ToggleRow $top={7}>Cross-report<Toggle>Off</Toggle></ToggleRow>
        <ToggleRow $top={8}>Keep all filters<Toggle $on>On</Toggle></ToggleRow>
        <Well $pl={6} $top={9}>Add drill-through fields here</Well>
      </VizPane>

      <FieldsPane>
        <PaneHead $split $pr={3}>
          Fields
          <ChevronsRight size={15} strokeWidth={1} />
        </PaneHead>
        <SearchWrap $pad="7px 0 0 3px">
          <PaneSearch $dark $w={143} $h={21}><SearchIcon size={13} strokeWidth={1.2} />Search</PaneSearch>
        </SearchWrap>
        <FieldList>
          {['public cust', 'public inventory', 'public products', 'public saleitems', 'public sales', 'public staff', 'public store'].map(f => (
            <FieldRow key={f}><ChevronRight size={12} strokeWidth={1} /><TableIcon />{f}</FieldRow>
          ))}
        </FieldList>
      </FieldsPane>
    </Body>
  </Window>
);

export default App;
